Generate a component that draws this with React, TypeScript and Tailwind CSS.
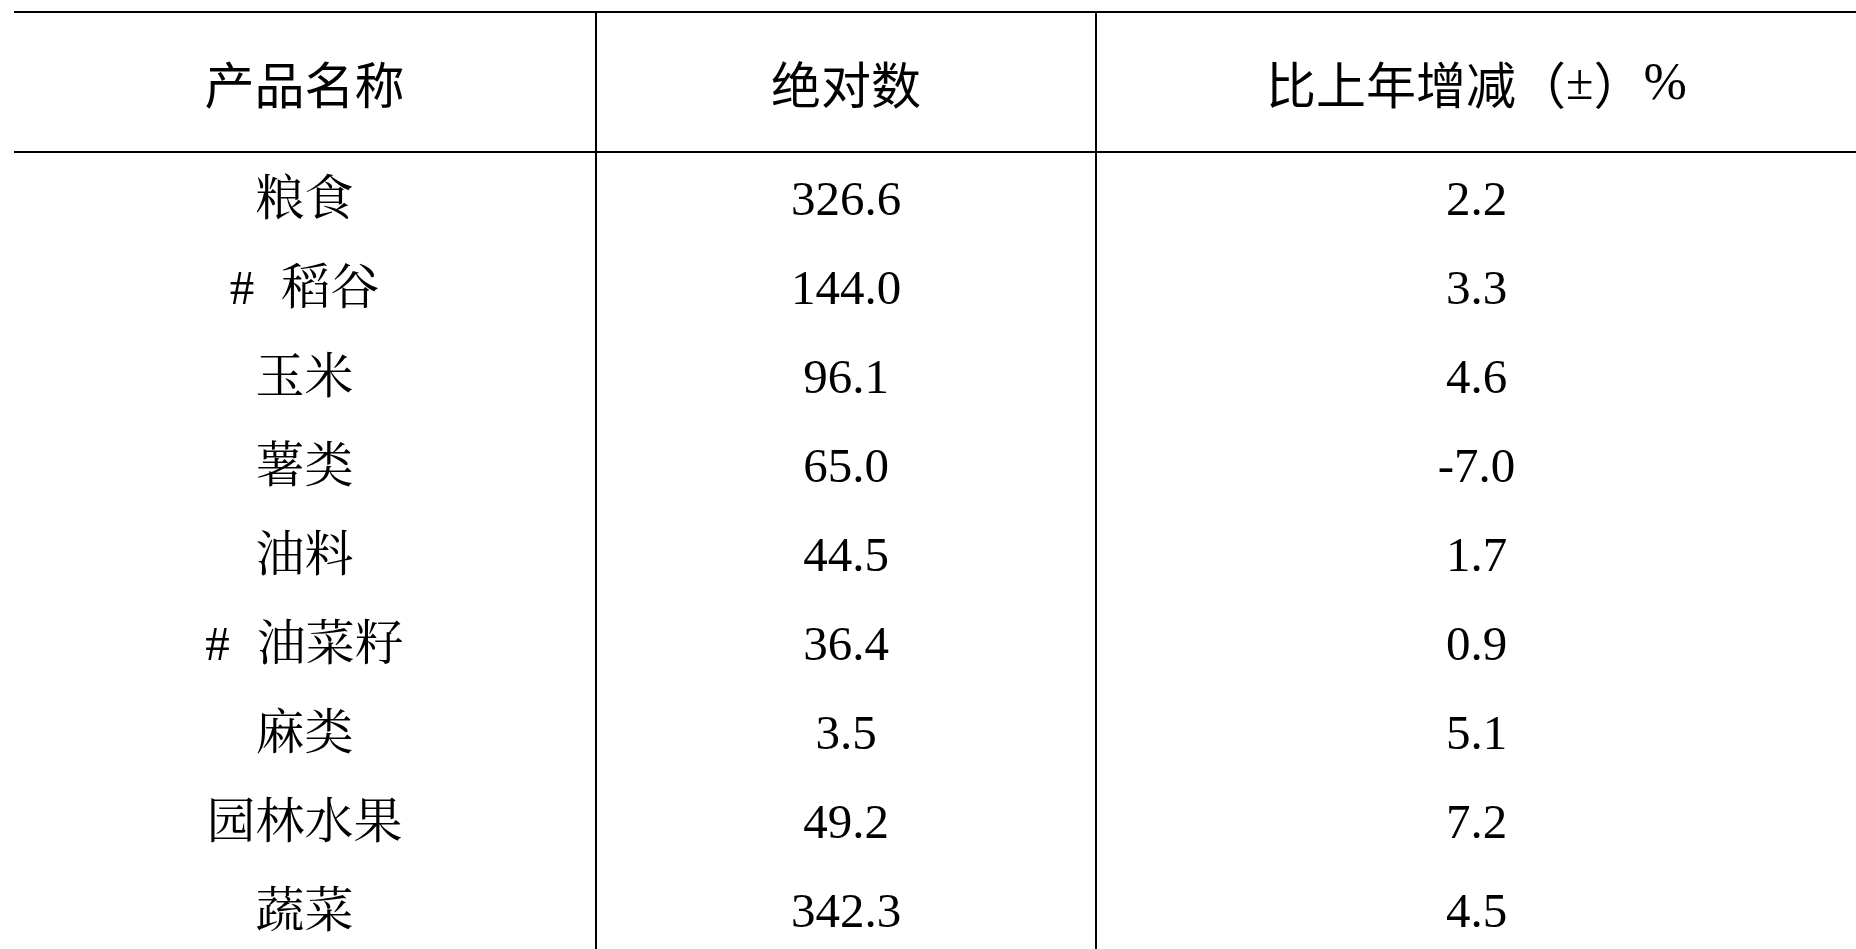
import React from "react";

const rows: { name: React.ReactNode; abs: string; pct: string }[] = [
  { name: "粮食", abs: "326.6", pct: "2.2" },
  { name: <><span>#</span><span className="ml-[27px]">稻谷</span></>, abs: "144.0", pct: "3.3" },
  { name: "玉米", abs: "96.1", pct: "4.6" },
  { name: "薯类", abs: "65.0", pct: "-7.0" },
  { name: "油料", abs: "44.5", pct: "1.7" },
  { name: <><span>#</span><span className="ml-[27px]">油菜籽</span></>, abs: "36.4", pct: "0.9" },
  { name: "麻类", abs: "3.5", pct: "5.1" },
  { name: "园林水果", abs: "49.2", pct: "7.2" },
  { name: "蔬菜", abs: "342.3", pct: "4.5" },
];

const serif = "font-['Liberation_Serif','Noto_Serif_CJK_SC','Noto_Sans_CJK_SC',serif]";
const sans = "font-['Noto_Sans_CJK_SC','Liberation_Sans',sans-serif]";

export default function App() {
  return (
    <div className="h-[949px] w-full overflow-hidden bg-white text-black">
      <div className="ml-[14px] mt-[11px] flex h-[2000px] flex-col border-t-2 border-black">
        <div className="grid h-[140px] grid-cols-[583px_500px_1fr] border-b-2 border-black">
          <div className={`flex items-center justify-center border-r-2 border-black text-[50px] leading-none ${sans}`}>
            产品名称
          </div>
          <div className={`flex items-center justify-center border-r-2 border-black text-[50px] leading-none ${sans}`}>
            绝对数
          </div>
          <div className={`flex items-center justify-center text-[50px] leading-none ${sans}`}>
            比上年增减（<span className="font-['Liberation_Serif',serif]">±</span>）<span className="font-['Liberation_Serif',serif] text-[52px]">%</span>
          </div>
        </div>
        <div className="grid flex-1 grid-cols-[583px_500px_1fr]">
          <div className="flex flex-col border-r-2 border-black">
            {rows.map((r, i) => (
              <div key={i} className={`flex h-[89px] items-center justify-center pt-[1px] text-[49px] leading-none ${serif}`}>
                {r.name}
              </div>
            ))}
          </div>
          <div className="flex flex-col border-r-2 border-black">
            {rows.map((r, i) => (
              <div key={i} className={`flex h-[89px] items-center justify-center pt-[1px] text-[49px] leading-none ${serif}`}>
                {r.abs}
              </div>
            ))}
          </div>
          <div className="flex flex-col">
            {rows.map((r, i) => (
              <div key={i} className={`flex h-[89px] items-center justify-center pt-[1px] text-[49px] leading-none ${serif}`}>
                {r.pct}
              </div>
            ))}
          </div>
        </div>
      </div>
    </div>
  );
}
